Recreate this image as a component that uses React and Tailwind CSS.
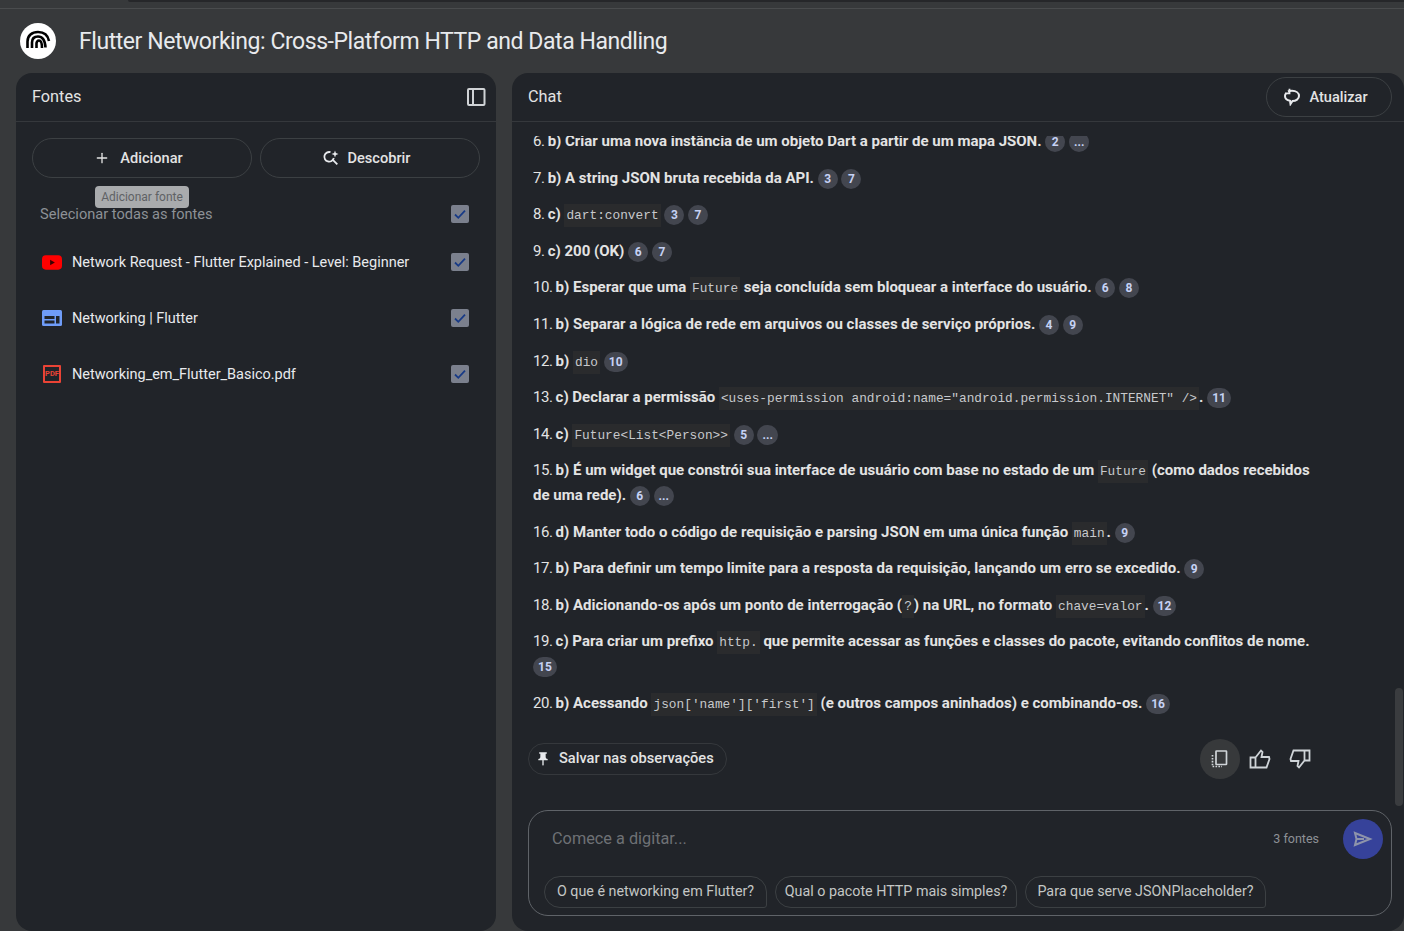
import { Plus } from "lucide-react";

const sans = { fontFamily: "Roboto, sans-serif" };

// citation chip
function C({ n }) {
  return (
    <span className="inline-flex items-center justify-center align-middle min-w-[20px] h-[20px] -my-[4px] px-[5px] rounded-full bg-[#43464f] text-[#c6d2f5] text-[12px] leading-none font-bold">
      {n}
    </span>
  );
}

function Code({ children }) {
  return (
    <code className="bg-[#2a2b2d] text-[#c7c9cc] px-[2px] py-[4px] font-['Liberation_Mono',monospace] text-[12.8px] leading-none font-normal">
      {children}
    </code>
  );
}

function Line({ num, children }) {
  return (
    <p className="text-[15px] leading-[24.6px] text-[#e3e3e3] mb-[12px] font-bold max-w-[790px]">
      <span className="font-normal tracking-[-0.5px]">{num}. </span>
      {children}
    </p>
  );
}

function Check() {
  return (
    <div className="w-[18px] h-[18px] rounded-[2px] bg-[#7b808d] flex items-center justify-center shrink-0">
      <svg width="14" height="14" viewBox="0 0 14 14" fill="none" stroke="#183a86" strokeWidth="1.8">
        <path d="M2 7.500l3.300 3.300L12 3.600" />
      </svg>
    </div>
  );
}

function Source({ icon, title }) {
  return (
    <div className="h-[56px] flex items-center pl-[26px] pr-[27px]">
      <div className="w-[20px] h-[20px] flex items-center justify-center mr-[10px]">{icon}</div>
      <span className="flex-1 pt-[1px] text-[14.5px] text-[#e8eaed] tracking-[-0.02px]">{title}</span>
      <Check />
    </div>
  );
}

function Chip({ className, children }) {
  return (
    <span className={`h-[32px] flex items-center justify-center border border-[#3c4043] rounded-[16px] rounded-br-[3px] text-[14.300px] text-[#c4c7c5] ${className}`}>
      {children}
    </span>
  );
}

export default function App() {
  return (
    <div style={sans} className="h-[931px] w-[1404px] overflow-hidden bg-[#37393b] flex flex-col">
      {/* browser strip */}
      <div className="h-[9px] border-b border-[#4a4c4e] shrink-0 pl-[128px]">
        <div className="h-[2px] bg-[#26272a] rounded-bl-[4px]" />
      </div>

      {/* title bar */}
      <div className="h-[64px] shrink-0 flex items-center pl-[20px]">
        <div className="w-[36px] h-[36px] rounded-full bg-white flex items-center justify-center mr-[23px]">
          <svg width="26" height="26" viewBox="0 0 26 26" fill="none" stroke="#000" strokeWidth="2.600">
            <path d="M2.500 20v-6.500C2.500 7.500 7 4 13 4c6 0 10 3.500 11 9" />
            <path d="M7 20v-5.500C7 10.500 9.500 8.500 13 8.500c4 0 7 3 7.500 11" />
            <path d="M11.500 20v-4.500c0-1.500 1-3 2.500-3s3 2 3 7.500" />
          </svg>
        </div>
        <h1 className="pt-[2px] text-[23px] font-normal text-[#e8eaed] tracking-[-0.44px]">
          Flutter Networking: Cross-Platform HTTP and Data Handling
        </h1>
      </div>

      <div className="flex-1 min-h-0 flex pl-[16px] gap-[16px]">
        {/* sources panel */}
        <div className="relative w-[480px] bg-[#212429] rounded-[16px] flex flex-col">
          <div className="h-[49px] border-b border-[#35383c] flex items-center justify-between pl-[16px] pr-[10px] shrink-0">
            <span className="pt-[1px] text-[16.300px] text-[#e3e3e3]">Fontes</span>
            <svg width="20" height="20" viewBox="0 0 20 20" fill="none" stroke="#d0d3d6" strokeWidth="2">
              <rect x="2" y="2" width="16.500" height="16" rx="1" />
              <path d="M7 2v16" />
            </svg>
          </div>

          <div className="grid grid-cols-2 gap-[8px] px-[16px] pt-[16px]">
            <button className="h-[40px] pr-[7px] rounded-full border border-[#3c4043] flex items-center justify-center gap-[10px] text-[14.600px] font-medium text-[#e3e3e3]">
              <Plus size={16} strokeWidth={2} />
              <span className="pt-[1px]">Adicionar</span>
            </button>
            <button className="h-[40px] pr-[7px] rounded-full border border-[#3c4043] flex items-center justify-center gap-[9px] text-[14.600px] font-medium text-[#e3e3e3]">
              <svg width="16" height="16" viewBox="0 0 16 16" fill="none" stroke="#e8eaed" strokeWidth="1.800">
                <path d="M7.500 2.200A4.800 4.800 0 1 0 10.800 8" />
                <path d="M9.300 9.300l5 5" />
                <path d="M12 .5l.9 2.600 2.600.9-2.600.9-.9 2.600-.9-2.600L8.500 4l2.600-.9z" fill="#e8eaed" stroke="none" />
              </svg>
              <span className="pt-[1px]">Descobrir</span>
            </button>
          </div>

          <div className="mt-[16px] h-[40px] flex items-center pl-[24px] pr-[27px] justify-between">
            <span className="pt-[1px] text-[14.600px] text-[#8d9196]">Selecionar todas as fontes</span>
            <Check />
          </div>

          <Source
            title="Network Request - Flutter Explained - Level: Beginner"
            icon={
              <svg width="21" height="15" viewBox="0 0 21 15">
                <rect width="21" height="15" rx="4" fill="#ff0000" />
                <path d="M8.500 4.500l5 3-5 3z" fill="#3a0000" />
              </svg>
            }
          />
          <Source
            title="Networking | Flutter"
            icon={
              <svg width="20" height="16" viewBox="0 0 20 16">
                <rect width="20" height="16" rx="1.500" fill="#6f9cf8" />
                <rect x="2.500" y="6" width="10" height="3" fill="#212429" />
                <rect x="2.500" y="10.500" width="10" height="3" fill="#212429" />
                <rect x="14" y="6" width="3.500" height="7.500" fill="#212429" />
              </svg>
            }
          />
          <Source
            title="Networking_em_Flutter_Basico.pdf"
            icon={
              <span className="w-[18px] h-[18px] border-2 border-[#ea4335] rounded-[1px] flex items-center justify-center text-[7.500px] font-bold leading-none text-[#ea4335]">
                PDF
              </span>
            }
          />

          {/* tooltip */}
          <div className="absolute left-[79px] top-[113px] w-[94px] h-[22px] rounded-[4px] bg-[#a9abad] text-[#5f6265] text-[12px] flex items-center justify-center">
            Adicionar fonte
          </div>
        </div>

        {/* chat panel */}
        <div className="relative flex-1 min-w-0 bg-[#212429] rounded-[16px] flex flex-col">
          <div className="h-[49px] border-b border-[#35383c] flex items-center justify-between pl-[16px] pr-[12px] shrink-0">
            <span className="pt-[1px] text-[16.300px] text-[#e3e3e3]">Chat</span>
            <button className="h-[40px] w-[126px] pr-[7px] rounded-full border border-[#3c4043] flex items-center justify-center gap-[8px] text-[14.600px] font-medium text-[#e3e3e3]">
              <svg width="18" height="18" viewBox="0 0 18 18" fill="none" stroke="#e8eaed" strokeWidth="2">
                <path d="M5 3.500C6 3 7.500 2.800 9 2.800c4 0 7 2.200 7 5.200 0 2.900-3 5-6.500 5l-2 3-.5-3.200C4 12.300 2 10.500 2 8c0-1 .4-1.900 1-2.600" />
                <path d="M6.500 .8v4.500H2" strokeWidth="1.800" />
              </svg>
              <span className="pt-[1px]">Atualizar</span>
            </button>
          </div>

          {/* messages */}
          <div className="h-[617px] shrink-0 pt-[14px] pl-[21px] pr-[60px]">
            <div className="h-full overflow-hidden">
              <div className="-mt-[7px]">
                <Line num="6">b) Criar uma nova instância de um objeto Dart a partir de um mapa JSON. <C n="2" /> <C n="..." /></Line>
                <Line num="7">b) A string JSON bruta recebida da API. <C n="3" /> <C n="7" /></Line>
                <Line num="8">c) <Code>dart:convert</Code> <C n="3" /> <C n="7" /></Line>
                <Line num="9">c) 200 (OK) <C n="6" /> <C n="7" /></Line>
                <Line num="10">b) Esperar que uma <Code>Future</Code> seja concluída sem bloquear a interface do usuário. <C n="6" /> <C n="8" /></Line>
                <Line num="11">b) Separar a lógica de rede em arquivos ou classes de serviço próprios. <C n="4" /> <C n="9" /></Line>
                <Line num="12">b) <Code>dio</Code> <C n="10" /></Line>
                <Line num="13">c) Declarar a permissão <Code>{'<uses-permission android:name="android.permission.INTERNET" />'}</Code>. <C n="11" /></Line>
                <Line num="14">c) <Code>{'Future<List<Person>>'}</Code> <C n="5" /> <C n="..." /></Line>
                <Line num="15">b) É um widget que constrói sua interface de usuário com base no estado de um <Code>Future</Code> (como dados recebidos de uma rede). <C n="6" /> <C n="..." /></Line>
                <Line num="16">d) Manter todo o código de requisição e parsing JSON em uma única função <Code>main</Code>. <C n="9" /></Line>
                <Line num="17">b) Para definir um tempo limite para a resposta da requisição, lançando um erro se excedido. <C n="9" /></Line>
                <Line num="18">b) Adicionando-os após um ponto de interrogação (<Code>?</Code>) na URL, no formato <Code>chave=valor</Code>. <C n="12" /></Line>
                <Line num="19">c) Para criar um prefixo <Code>http.</Code> que permite acessar as funções e classes do pacote, evitando conflitos de nome. <C n="15" /></Line>
                <Line num="20">b) Acessando <Code>json['name']['first']</Code> (e outros campos aninhados) e combinando-os. <C n="16" /></Line>
              </div>
            </div>
          </div>

          {/* action row */}
          <div className="h-[40px] flex items-center justify-between pl-[16px] pr-[84px] shrink-0">
            <button className="h-[32px] w-[199px] rounded-full border border-[#35383c] flex items-center pl-[6px] gap-[8px] text-[14.600px] font-medium text-[#e3e3e3]">
              <svg width="16" height="16" viewBox="0 0 24 24" fill="#e8eaed">
                <path d="M16 9V4h1c.55 0 1-.45 1-1s-.45-1-1-1H7c-.55 0-1 .45-1 1s.45 1 1 1h1v5c0 1.660-1.340 3-3 3v2h6v7l1 1 1-1v-7h6v-2c-1.660 0-3-1.340-3-3z" />
              </svg>
              Salvar nas observações
            </button>
            <div className="flex items-center">
              <div className="w-[40px] h-[40px] rounded-full bg-[#37393b] flex items-center justify-center">
                <svg width="20" height="20" viewBox="0 0 20 20" fill="none" stroke="#cfd4d8" strokeWidth="1.700">
                  <rect x="6" y="2" width="10.500" height="13.500" rx="0.5" />
                  <path d="M2.500 6v11.500H12" strokeDasharray="1.600 1.300" />
                </svg>
              </div>
              <div className="w-[40px] h-[40px] flex items-center justify-center">
                <svg width="24" height="24" viewBox="0 0 24 24" fill="none" stroke="#cfd4d8" strokeWidth="1.800">
                  <path d="M7.500 10.500L13 3.500l1.500 1.500-1 5H21l.5 2-3 8.500H7.500zM2.500 10.500h5v10h-5z" />
                </svg>
              </div>
              <div className="w-[40px] h-[40px] flex items-center justify-center">
                <svg width="24" height="24" viewBox="0 0 24 24" fill="none" stroke="#cfd4d8" strokeWidth="1.800">
                  <path d="M16.500 13.500L11 20.500 9.500 19l1-5H3l-.5-2 3-8.500h11zM16.500 3.500h5v10h-5z" />
                </svg>
              </div>
            </div>
          </div>

          {/* composer */}
          <div className="mt-[31px] ml-[16px] mr-[12px] h-[106px] rounded-[20px] border border-[#5f6368] flex flex-col pl-[15px] pr-[8px] pt-[8px]">
            <div className="h-[40px] flex items-center justify-between">
              <span className="pl-[8px] text-[16.300px] text-[#6e7175]">Comece a digitar...</span>
              <div className="flex items-center gap-[24px]">
                <span className="text-[12.500px] text-[#8d9196]">3 fontes</span>
                <div className="w-[40px] h-[40px] rounded-full bg-[#36429a] flex items-center justify-center">
                  <svg width="20" height="20" viewBox="0 0 20 20" fill="none" stroke="#8e94ab" strokeWidth="2">
                    <path d="M2 4l15 6-15 6 1.500-6zM3.500 10H11" />
                  </svg>
                </div>
              </div>
            </div>
            <div className="flex gap-[8px] mt-[17px]">
              <Chip className="w-[223px]">O que é networking em Flutter?</Chip>
              <Chip className="w-[242px]">Qual o pacote HTTP mais simples?</Chip>
              <Chip className="w-[241px]">Para que serve JSONPlaceholder?</Chip>
            </div>
          </div>

          {/* scrollbar */}
          <div className="absolute right-[1px] top-[615px] w-[8px] h-[118px] rounded-full bg-[#3a3c3f]" />
        </div>
      </div>
    </div>
  );
}
